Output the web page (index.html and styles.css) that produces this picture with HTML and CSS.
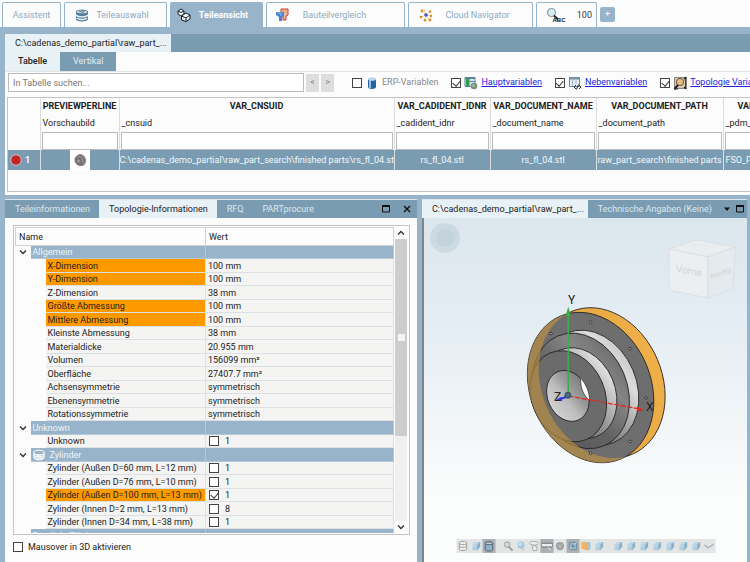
FILE: index.html
```html
<!DOCTYPE html>
<html lang="de">
<head>
<meta charset="utf-8">
<title>Teileansicht</title>
<link rel="stylesheet" href="styles.css">
</head>
<body>
<svg class="defs" aria-hidden="true">
  <defs>
    <linearGradient id="cubeFill" x1="0" y1="0" x2="1" y2="1"><stop offset="0" stop-color="#c9e0ed"/><stop offset="1" stop-color="#9dc1d8"/></linearGradient>
    <symbol id="cube" viewBox="0 0 12 12"><path d="M2 4l3-2.500h5.500v5L7.500 10.500H2z" fill="url(#cubeFill)"/><path d="M7.500 4l3-2.500v5l-3 4z" fill="#87afc9"/></symbol>
    <symbol id="chevron" viewBox="0 0 8 8"><path d="M1 2.500l3 3 3-3" fill="none" stroke="#333" stroke-width="1.400"/></symbol>
  </defs>
</svg>

<nav class="main-tabs">
  <button class="main-tab w-assist">Assistent</button>
  <button class="main-tab w-select">
    <svg class="icon" viewBox="0 0 14 14"><path d="M1 4.500v7c1 2.500 11 2.500 12 0v-7z" fill="#56809b"/><path d="M1 4c1-2.600 11-2.600 12 0-1 2.600-11 2.600-12 0z" fill="#d3e3ed" stroke="#416a85" stroke-width=".8"/><path d="M1 7c2 2.500 10 2.500 12 0M2 10c2 2 8 2 10 0" fill="none" stroke="#e6f0f5" stroke-width="1.300"/><path d="M4 4l5-1.500M6 5l4-1.500" stroke="#416a85" stroke-width=".8"/></svg>
    <span>Teileauswahl</span></button>
  <button class="main-tab w-view active">
    <svg class="icon" viewBox="0 0 14 14"><g fill="#eef3f6" stroke="#17202a" stroke-width="1"><path d="M1 3l3-2 3 2v3L4 8 1 6z"/><path d="M4.500 8l4.500-3 4 2v4l-4 2.500L4.500 12z"/><path d="M4.500 8l4.500 2 4-3M9 10v3.500M1 3l3 1.500L7 3" fill="none"/></g></svg>
    <span>Teileansicht</span></button>
  <button class="main-tab w-compare">
    <svg class="icon" viewBox="0 0 14 14"><path d="M6 1h7v6l-2 1v4H8V8L6 6z" fill="#e8b9a4" stroke="#d5372d" stroke-width="1"/><path d="M7.500 3h3.500v2" fill="none" stroke="#eaa22f"/><path d="M1 4h8v4L7 9v4H4V9L1 7z" fill="#4a83cf"/><path d="M2 5h4v3" fill="none" stroke="#8db9ec"/></svg>
    <span>Bauteilvergleich</span></button>
  <button class="main-tab w-cloud">
    <svg class="icon" viewBox="0 0 14 14"><path d="M3 3l4 4 4-3M2 9l5-2 5 1M6 12l1-5 4 5M5 1l2 6" stroke="#edc17b" stroke-width=".8" fill="none"/><g fill="#dd8a16"><circle cx="3" cy="3" r="1.400"/><circle cx="11" cy="3.500" r="1.200"/><circle cx="2" cy="9" r="1.300"/><circle cx="12" cy="8" r="1.200"/><circle cx="6" cy="12.300" r="1.300"/><circle cx="11" cy="12" r="1.400"/></g><circle cx="7" cy="7" r="1.700" fill="#3a4ee0"/></svg>
    <span>Cloud Navigator</span></button>
  <button class="main-tab w-search">
    <svg class="icon-search" viewBox="0 0 20 16"><circle cx="5.500" cy="5.500" r="4" fill="#d6ecf7" stroke="#949da3" stroke-width="1.200"/><path d="M8 8.500l4 4" stroke="#222" stroke-width="1.800"/><text x="6.500" y="14.500" class="abc">ABC</text></svg>
    <span>100</span></button>
  <button class="add-tab" aria-label="Neuer Tab">+</button>
</nav>

<main class="workspace">
  <section class="panel table-panel">
    <div class="bar"><button class="bar-tab active doc">C:\cadenas_demo_partial\raw_part_...</button></div>
    <div class="sub-tabs"><button class="sub-tab active">Tabelle</button><button class="sub-tab">Vertikal</button></div>
    <div class="toolbar">
      <input class="search" type="text" placeholder="In Tabelle suchen..." aria-label="In Tabelle suchen">
      <button class="step">&lt;</button><button class="step">&gt;</button>
      <label class="option muted"><input type="checkbox">
        <svg class="icon" viewBox="0 0 14 14"><path d="M3 3v8c0 2.500 8 2.500 8 0V3z" fill="#28669a"/><path d="M5 4v8" stroke="#8cc4e8" stroke-width="2"/><ellipse cx="7" cy="3" rx="4" ry="1.800" fill="#b8d9ec"/></svg>
        <span>ERP-Variablen</span></label>
      <label class="option"><input type="checkbox" checked>
        <svg class="icon" viewBox="0 0 14 14"><path d="M1 1.500h10v9H1z" fill="#dbe6ee" stroke="#5e8298"/><path d="M2 3h3.500v7H2z" fill="#27a148"/><path d="M1 2.500h10M5.500 5.500H11" stroke="#5e8298"/><circle cx="10" cy="10" r="3.300" fill="#76937f"/><circle cx="9.500" cy="9.500" r="1.300" fill="#a8bbb0"/></svg>
        <a href="#haupt">Hauptvariablen</a></label>
      <label class="option"><input type="checkbox" checked>
        <svg class="icon" viewBox="0 0 14 14"><path d="M1.500 1.500h10v9h-10z" fill="#e7f0f5" stroke="#6b8ca3"/><path d="M1.500 2.500h10" stroke="#6b8ca3" stroke-width="2"/><path d="M4.500 2v8M8 2v6" stroke="#9cb8ca"/><path d="M8 9l-2 2 2 2M11 9l2 2-2 2M10.500 8.500L8.500 13.500" stroke="#222" fill="none"/></svg>
        <a href="#neben">Nebenvariablen</a></label>
      <label class="option"><input type="checkbox" checked>
        <svg class="icon" viewBox="0 0 14 14"><path d="M1.500 1.500h11v11h-11z" fill="#d9c8ad" stroke="#8c877d"/><path d="M13 1v12M11 3l2-2M11 11l2 2M1 13h4" stroke="#222" stroke-width="1.200"/><circle cx="7" cy="6" r="3.600" fill="#e9bd7b" stroke="#645a50"/><path d="M5 9l-3.500 4" stroke="#222" stroke-width="2"/></svg>
        <a href="#topo">Topologie Variablen</a></label>
    </div>
    <div class="grid-frame">
      <table class="parts">
        <colgroup><col class="c-num"><col class="c-prev"><col class="c-uid"><col class="c-idnr"><col class="c-name"><col class="c-path"><col class="c-pdm"></colgroup>
        <thead>
          <tr class="keys"><th></th><th>PREVIEWPERLINE</th><th>VAR_CNSUID</th><th>VAR_CADIDENT_IDNR</th><th>VAR_DOCUMENT_NAME</th><th>VAR_DOCUMENT_PATH</th><th>VAR_PDM_STATE</th></tr>
          <tr class="labels"><td></td><td>Vorschaubild</td><td>_cnsuid</td><td>_cadident_idnr</td><td>_document_name</td><td>_document_path</td><td>_pdm_state</td></tr>
          <tr class="filters"><td></td><td><input type="text" aria-label="Filter Vorschaubild"></td><td><input type="text" aria-label="Filter cnsuid"></td><td><input type="text" aria-label="Filter idnr"></td><td><input type="text" aria-label="Filter name"></td><td><input type="text" aria-label="Filter path"></td><td><input type="text" aria-label="Filter pdm"></td></tr>
        </thead>
        <tbody>
          <tr class="selected">
            <td class="num"><span class="status"><svg viewBox="0 0 12 12"><circle cx="6" cy="6" r="5.300" fill="#c92b28" stroke="#f0d5d5" stroke-width=".7"/><path d="M3 4h6M3 8h6M6 3v6" stroke="#a31c1a" stroke-width=".8"/></svg>1</span></td>
            <td class="preview"><span class="thumb"><svg viewBox="0 0 14 14"><ellipse cx="8" cy="7" rx="5" ry="6" transform="rotate(-20 8 7)" fill="#8c8c8c"/><ellipse cx="6.500" cy="7.500" rx="5" ry="5.500" transform="rotate(-20 6 7)" fill="#747474"/><path d="M4 4c4-2 6 2 6 6" fill="none" stroke="#a2a2a2"/><circle cx="5.500" cy="8" r="1.500" fill="#9c9c9c"/></svg></span></td>
            <td class="tight">C:\cadenas_demo_partial\raw_part_search\finished parts\rs_fl_04.stl</td><td>rs_fl_04.stl</td><td>rs_fl_04.stl</td><td class="tight">raw_part_search\finished parts</td><td class="left">FSO_PART</td>
          </tr>
        </tbody>
      </table>
    </div>
  </section>

  <div class="lower">
    <section class="panel info-panel">
      <div class="bar">
        <button class="bar-tab">Teileinformationen</button><button class="bar-tab active">Topologie-Informationen</button><button class="bar-tab">RFQ</button><button class="bar-tab">PARTprocure</button>
        <span class="spacer"></span>
        <button class="win" aria-label="Maximieren"><svg viewBox="0 0 8 8"><path d="M.5 1h7v6h-7z" fill="none" stroke="#111"/><path d="M0 1h8" stroke="#111" stroke-width="2"/></svg></button>
        <button class="win" aria-label="Schließen"><svg viewBox="0 0 8 8"><path d="M1 1l6 6M7 1L1 7" stroke="#111" stroke-width="1.400"/></svg></button>
      </div>
      <div class="tree-frame">
        <div class="tree-view">
          <table class="tree">
            <colgroup><col class="t-arrow"><col class="t-indent"><col class="t-name"><col></colgroup>
            <thead><tr><th colspan="3">Name</th><th>Wert</th></tr></thead>
            <tbody>
              <tr class="group"><td><svg><use href="#chevron"/></svg></td><td colspan="2">Allgemein</td><td></td></tr>
              <tr class="hit"><td></td><td></td><td>X-Dimension</td><td>100 mm</td></tr>
              <tr class="hit"><td></td><td></td><td>Y-Dimension</td><td>100 mm</td></tr>
              <tr><td></td><td></td><td>Z-Dimension</td><td>38 mm</td></tr>
              <tr class="hit"><td></td><td></td><td>Größte Abmessung</td><td>100 mm</td></tr>
              <tr class="hit"><td></td><td></td><td>Mittlere Abmessung</td><td>100 mm</td></tr>
              <tr><td></td><td></td><td>Kleinste Abmessung</td><td>38 mm</td></tr>
              <tr><td></td><td></td><td>Materialdicke</td><td>20.955 mm</td></tr>
              <tr><td></td><td></td><td>Volumen</td><td>156099 mm³</td></tr>
              <tr><td></td><td></td><td>Oberfläche</td><td>27407.7 mm²</td></tr>
              <tr><td></td><td></td><td>Achsensymmetrie</td><td>symmetrisch</td></tr>
              <tr><td></td><td></td><td>Ebenensymmetrie</td><td>symmetrisch</td></tr>
              <tr><td></td><td></td><td>Rotationssymmetrie</td><td>symmetrisch</td></tr>
              <tr class="group"><td><svg><use href="#chevron"/></svg></td><td colspan="2">Unknown</td><td></td></tr>
              <tr><td></td><td></td><td>Unknown</td><td><label><input type="checkbox">1</label></td></tr>
              <tr class="group"><td><svg><use href="#chevron"/></svg></td><td colspan="2"><span class="with-icon"><svg viewBox="0 0 12 12"><path d="M.8 3.500v5c.5 3 10 3 10.400 0v-5" fill="#c7d9e5" stroke="#fff"/><ellipse cx="6" cy="3.500" rx="5.200" ry="2.300" fill="#98b4ca" stroke="#fff"/><path d="M2 7l8 3M1 9l5 2M4 6.500l6 1.500" stroke="#fff"/></svg>Zylinder</span></td><td></td></tr>
              <tr><td></td><td></td><td>Zylinder (Außen D=60 mm, L=12 mm)</td><td><label><input type="checkbox">1</label></td></tr>
              <tr><td></td><td></td><td>Zylinder (Außen D=76 mm, L=10 mm)</td><td><label><input type="checkbox">1</label></td></tr>
              <tr class="hit"><td></td><td></td><td>Zylinder (Außen D=100 mm, L=13 mm)</td><td><label><input type="checkbox" checked>1</label></td></tr>
              <tr><td></td><td></td><td>Zylinder (Innen D=2 mm, L=13 mm)</td><td><label><input type="checkbox">8</label></td></tr>
              <tr><td></td><td></td><td>Zylinder (Innen D=34 mm, L=38 mm)</td><td><label><input type="checkbox">1</label></td></tr>
              <tr class="group"><td></td><td colspan="2">Parallele Flächen</td><td></td></tr>
            </tbody>
          </table>
        </div>
        <div class="scrollbar">
          <svg viewBox="0 0 8 8"><path d="M1 5.500l3-3 3 3" fill="none" stroke="#333" stroke-width="1.400"/></svg>
          <div class="track"><div class="thumb-bar"><i></i></div></div>
          <svg viewBox="0 0 8 8"><use href="#chevron"/></svg>
        </div>
      </div>
      <label class="mouseover"><input type="checkbox">Mausover in 3D aktivieren</label>
    </section>

    <section class="panel view-panel">
      <div class="bar">
        <button class="bar-tab active doc">C:\cadenas_demo_partial\raw_part_...</button><button class="bar-tab tech">Technische Angaben (Keine)</button>
        <span class="spacer"></span>
        <button class="win" aria-label="Ansichten"><svg viewBox="0 0 8 8"><path d="M1 2.500h6L4 6z" fill="#111"/></svg></button>
        <button class="win" aria-label="Maximieren"><svg viewBox="0 0 8 8"><path d="M.5 1h7v6h-7z" fill="none" stroke="#111"/><path d="M0 1h8" stroke="#111" stroke-width="2"/></svg></button>
      </div>
      <div class="viewer">
        <svg class="scene" viewBox="0 0 323 344" preserveAspectRatio="xMidYMin slice">
          <defs>
            <linearGradient id="orange" x1="0" y1="0" x2="0" y2="1"><stop offset="0" stop-color="#efb04a"/><stop offset=".6" stop-color="#e6a63f"/><stop offset="1" stop-color="#c98d20"/></linearGradient>
            <linearGradient id="ring" gradientUnits="userSpaceOnUse" x1="260" y1="150" x2="360" y2="500"><stop offset="0" stop-color="#c2c2c2"/><stop offset=".2" stop-color="#dcdcdc"/><stop offset=".42" stop-color="#a5a5a5"/><stop offset=".6" stop-color="#7c7c7c"/><stop offset=".85" stop-color="#727272"/><stop offset="1" stop-color="#b8b8b8"/></linearGradient>
            <linearGradient id="cone" gradientUnits="userSpaceOnUse" x1="180" y1="160" x2="300" y2="500"><stop offset="0" stop-color="#666"/><stop offset=".3" stop-color="#858585"/><stop offset=".6" stop-color="#626262"/><stop offset=".85" stop-color="#5c5c5c"/><stop offset="1" stop-color="#808080"/></linearGradient>
            <linearGradient id="bore" gradientUnits="userSpaceOnUse" x1="170" y1="270" x2="215" y2="425"><stop offset="0" stop-color="#6e6e6e"/><stop offset=".4" stop-color="#9b9b9b"/><stop offset=".6" stop-color="#bdbdbd"/><stop offset="1" stop-color="#d8d8d8"/></linearGradient>
            <clipPath id="boreClip"><ellipse cx="204" cy="348" rx="79" ry="61" transform="rotate(67 204 348)"/></clipPath>
            <mask id="outsideBack" maskUnits="userSpaceOnUse" x="0" y="0" width="570" height="600"><path d="M0 0h570v600H0z" fill="#fff" stroke="none"/><ellipse cx="306" cy="309" rx="233" ry="181" transform="rotate(67 306 309)" fill="#000"/></mask>
          </defs>
          <circle cx="21" cy="20" r="15" fill="#c5d5de" opacity=".75"/><circle cx="21" cy="20" r="9" fill="#bccfd8" opacity=".6"/>
          <g class="nav-cube" stroke="#d7dbde" stroke-width=".7">
            <path d="M245 31l27-9 39 7-27 10z" fill="#e9eef1"/><path d="M245 31l39 8v41l-39-8z" fill="#ebeff2"/><path d="M284 39l27-10-2 42-25 9z" fill="#e4eaee"/><path d="M267 28l8-2 9 2" fill="none" stroke-dasharray="2 1"/>
            <text class="cube-label" transform="translate(252 54) skewY(10)">Vorne</text><text class="cube-label small" transform="translate(286 61) skewY(-18)">Rechts</text>
          </g>
          <g transform="translate(76 62) scale(.333)" stroke="#222" stroke-width="2.400" fill="none">
            <ellipse cx="306" cy="309" rx="233" ry="181" transform="rotate(67 306 309)" fill="url(#orange)"/>
            <ellipse cx="272" cy="323" rx="233" ry="181" transform="rotate(67 272 323)" fill="#6e6e6e"/>
            <ellipse cx="271" cy="324" rx="179" ry="139" transform="rotate(67 271 324)" fill="url(#ring)"/>
            <ellipse cx="243" cy="333" rx="179" ry="139" transform="rotate(67 243 333)" fill="url(#cone)"/>
            <ellipse cx="236" cy="340" rx="141" ry="110" transform="rotate(67 236 340)" fill="url(#ring)"/>
            <ellipse cx="205" cy="349" rx="141" ry="110" transform="rotate(67 205 349)" fill="#6b6b6b"/>
            <ellipse cx="204" cy="348" rx="79" ry="61" transform="rotate(67 204 348)" fill="url(#bore)"/>
            <path d="M243 288c-4 30 6 58 24 72l30-20-25-60z" fill="#fbfbfb" stroke-width="2" clip-path="url(#boreClip)"/>
            <g mask="url(#outsideBack)"><ellipse cx="272" cy="323" rx="233" ry="181" transform="rotate(67 272 323)" fill="#c39340" fill-opacity=".62" stroke="none"/></g>
            <g fill="#aaa"><circle cx="272" cy="127" r="4"/><circle cx="153" cy="161" r="4"/><circle cx="390" cy="206" r="4"/><circle cx="439" cy="354" r="4"/><circle cx="391" cy="485" r="4"/><circle cx="272" cy="520" r="4"/></g>
            <g stroke-width="4"><path d="M205 345V100" stroke="#3dac48" stroke-width="5"/><path d="M205 80l-8 27h16z" fill="#3dac48" stroke="none"/><path d="M205 348l212 39" stroke="#dc2a20" stroke-dasharray="16 4"/><path d="M433 391l-20-11-3 14z" fill="#dc2a20" stroke="none"/><path d="M203 350l-25 8" stroke="#2d35d8" stroke-width="6"/><path d="M168 361l15-10 4 12z" fill="#2d35d8" stroke="none"/></g>
            <circle cx="204" cy="346" r="9" fill="#456b80" stroke="#283e4c"/>
          </g>
          <g class="axis"><text x="144" y="86">Y</text><text x="222" y="193">X</text><text x="130" y="183">Z</text></g>
        </svg>
        <div class="view-tools">
          <button aria-label="Drahtmodell"><svg viewBox="0 0 12 12"><path d="M2 2.500v7c0 2 8 2 8 0v-7c0-2-8-2-8 0zM2 3c0 2 8 2 8 0M2 6c0 2 8 2 8 0" fill="#eee" stroke="#999"/></svg></button>
          <button aria-label="Schattiert"><svg><use href="#cube"/></svg></button>
          <button class="on" aria-label="Schattiert mit Kanten"><svg viewBox="0 0 12 12"><path d="M2 3v7c0 2 8 2 8 0V3c0-2-8-2-8 0z" fill="#8fb1c8" stroke="#4e6170"/><ellipse cx="6" cy="3" rx="4" ry="1.500" fill="#bfd3df" stroke="#4e6170"/></svg></button>
          <i class="gap"></i>
          <button aria-label="Zoom"><svg viewBox="0 0 12 12"><circle cx="5" cy="4.500" r="3" fill="#d5d8da" stroke="#999"/><path d="M7 7l4 4" stroke="#999" stroke-width="2"/></svg></button>
          <button aria-label="Einpassen"><svg viewBox="0 0 12 12"><circle cx="6" cy="5" r="4" fill="#a9cbe0"/><circle cx="5" cy="4" r="2" fill="#c7ddea"/><path d="M7 8l2 3" stroke="#aaa"/></svg></button>
          <button aria-label="Drehen"><svg viewBox="0 0 12 12"><ellipse cx="6" cy="3" rx="5" ry="2" fill="#eee" stroke="#aaa"/><path d="M4 6h5v5H5z" fill="#eee" stroke="#aaa"/></svg></button>
          <button class="on" aria-label="Messen"><svg viewBox="0 0 12 12"><path d="M0 3h12v4H0z" fill="#eee" stroke="#666"/><path d="M7 7l3 4" stroke="#eee"/></svg></button>
          <button aria-label="Mittelpunkt"><svg viewBox="0 0 12 12"><circle cx="6" cy="6" r="4.500" fill="#999"/><path d="M2 4l8 4M6 1.500v9M2 8l8-4" stroke="#bbb"/></svg></button>
          <button class="on" aria-label="Schnitt"><svg viewBox="0 0 12 12"><path d="M2 2h8v8H2z" fill="#9ab9cc" stroke="#6f8796"/><path d="M2 10l8-8" stroke="#ddd"/><circle cx="6" cy="6" r="2" fill="#6c93ac"/></svg></button>
          <button aria-label="Schnittebene"><svg viewBox="0 0 12 12"><path d="M3 1l8 1v7l-2 2-6-2z" fill="#a9c4d4"/><path d="M1 1l7 2v8L1 9z" fill="#f1b35d"/></svg></button>
          <button aria-label="Perspektive"><svg><use href="#cube"/></svg></button>
          <i class="gap"></i>
          <button aria-label="Vorne"><svg><use href="#cube"/></svg></button>
          <button aria-label="Hinten"><svg><use href="#cube"/></svg></button>
          <button aria-label="Links"><svg><use href="#cube"/></svg></button>
          <button aria-label="Rechts"><svg><use href="#cube"/></svg></button>
          <button aria-label="Oben"><svg><use href="#cube"/></svg></button>
          <button aria-label="Unten"><svg><use href="#cube"/></svg></button>
          <button aria-label="Isometrisch"><svg><use href="#cube"/></svg></button>
          <button aria-label="Mehr"><svg viewBox="0 0 12 12"><path d="M1 5l4 3 6-4" fill="none" stroke="#9fb0bc" stroke-width="1.300"/></svg></button>
        </div>
      </div>
    </section>
  </div>
</main>
</body>
</html>
```
FILE: styles.css
```css
:root {
  --blue: #98b4ca;
  --bar: #7a9cb2;
  --pale: #e8f1f6;
  --white: #fcfcfc;
  --line: #c4c4c4;
}
* { box-sizing: border-box; }
body {
  margin: 0;
  height: 100vh;
  overflow: hidden;
  display: flex;
  flex-direction: column;
  background: var(--white);
  color: #222;
  font: 9px/13px Roboto, "Noto Sans", sans-serif;
}
button, input { font: inherit; color: inherit; margin: 0; }
button { border: 0; padding: 0; background: none; white-space: nowrap; }
svg { display: block; }
.defs { position: absolute; width: 0; height: 0; }
.icon { width: 14px; height: 14px; flex: none; }

input[type="checkbox"] {
  appearance: none;
  flex: none;
  display: grid;
  justify-items: center;
  width: 10px;
  height: 10px;
  border: 1px solid #444;
  background: #fff;
}
input[type="checkbox"]:checked::after {
  content: "";
  width: 4px;
  height: 6px;
  border: solid #333;
  border-width: 0 1px 1px 0;
  transform: rotate(40deg);
}

/* main tabs */
.main-tabs { display: flex; gap: 3px; padding: 2px 2px 0; height: 27px; flex: none; }
.main-tab {
  display: flex;
  align-items: center;
  flex: none;
  height: 25px;
  padding: 0 10px;
  border: 1px solid var(--blue);
  border-bottom: 0;
  border-radius: 2px 2px 0 0;
  color: #8daac2;
}
.main-tab span { flex: 1; text-align: center; }
.main-tab.active { background: var(--blue); color: #fff; font-weight: 700; }
.w-assist { width: 59px; justify-content: center; }
.w-select { width: 103px; }
.w-view { width: 93px; padding: 0 6px; }
.w-compare { width: 139px; padding: 0 24px 0 8px; }
.w-cloud { width: 125px; }
.w-search { width: 61px; padding: 0 4px 0 9px; color: #333; }
.w-search span { text-align: right; }
.icon-search { width: 20px; height: 16px; flex: none; }
.abc { font: bold 6px "Liberation Sans", sans-serif; fill: #111; }
.add-tab { width: 15px; height: 15px; margin-top: 5px; border-radius: 2px; background: var(--blue); color: #fff; }

/* panels */
.workspace {
  flex: 1;
  min-height: 0;
  display: flex;
  flex-direction: column;
  gap: 4px;
  padding: 7px 0 0 5px;
  background: var(--blue);
}
.panel { background: var(--white); min-width: 0; overflow: hidden; }
.table-panel { padding-bottom: 3px; flex: none; }
.bar { display: flex; height: 18px; background: var(--bar); }
.bar-tab { padding: 0 9px 0 10px; color: #dce8ef; }
.bar-tab.active { background: var(--pale); color: #222; }
.bar-tab.doc { padding-right: 4px; }
.sub-tabs { display: flex; height: 20px; border-bottom: 1px solid #e3e3e3; }
.sub-tab { padding: 0 13px; background: var(--bar); color: #e4edf2; }
.sub-tab.active { background: var(--pale); color: #222; font-weight: 500; }

.toolbar { display: flex; align-items: center; height: 25px; padding: 0 3px 4px; white-space: nowrap; overflow: hidden; }
.search { flex: none; width: 296px; height: 19px; border: 1px solid #bbb; padding: 0 4px; background: #fff; }
.search::placeholder { color: #777; opacity: 1; }
.step { flex: none; width: 13px; height: 18px; margin-left: 2px; background: #dedede; color: #888; }
.option { display: flex; align-items: center; gap: 3px; margin-left: 13px; flex: none; }
.option.muted { margin-left: 18px; color: #888; }
.option a { color: #2323dd; }

.grid-frame { margin-left: 2px; height: 95px; border: 1px solid var(--line); border-right: 0; overflow: hidden; }
.parts { width: 816px; table-layout: fixed; border-collapse: collapse; }
.parts th, .parts td { padding: 0 2px; border-right: 1px solid #ddd; overflow: hidden; white-space: nowrap; }
.c-num { width: 32px; }
.c-prev { width: 79px; }
.c-uid { width: 275px; }
.c-idnr { width: 96px; }
.c-name { width: 106px; }
.c-path { width: 127px; }
.keys { height: 17px; font-weight: 700; }
.labels { height: 17px; }
.filters { height: 18px; }
.parts .filters td { padding: 0 1px; }
.filters input { display: block; width: 100%; height: 18px; border: 1px solid #bbb; background: #fff; }
.selected { height: 20px; background: var(--bar); color: #f4f8fa; text-align: center; }
.parts .left { text-align: left; }
.parts .tight { padding: 0; }
.status { display: flex; align-items: center; gap: 3px; font-weight: 700; }
.status svg { width: 12px; height: 12px; }
.thumb { display: block; width: 20px; height: 20px; padding: 3px; margin: 0 auto; background: #fff; }

/* lower half */
.lower { flex: 1; min-height: 0; display: flex; gap: 5px; padding-right: 3px; }
.info-panel { flex: 412 1 0; display: flex; flex-direction: column; }
.view-panel { flex: 325 1 0; display: flex; flex-direction: column; }
.info-panel, .view-panel { border-top: 1px solid #dbe6ee; }
.lower .bar { flex: none; }
.spacer { flex: 1; }
.win { width: 21px; display: grid; place-items: center; }
.win svg { width: 8px; height: 8px; }
.view-panel .win { width: 18px; }

.tree-frame { display: flex; flex: 1; min-height: 0; margin: 7px 7px 0 8px; padding: 1px; border: 1px solid var(--line); }
.tree-view { flex: 1; min-width: 0; overflow: hidden; }
.tree { width: 100%; table-layout: fixed; border-collapse: collapse; }
.tree td, .tree th { padding: 0 3px; overflow: hidden; white-space: nowrap; font-weight: 400; text-align: left; line-height: 12px; }
.tree th { height: 18px; border: 1px solid #d2d2d2; }
.t-arrow, .t-indent { width: 15px; }
.t-name { width: 160px; }
.tree tbody tr { height: 13px; }
.tree tbody tr:nth-child(even) { height: 14px; }
.tree tbody td:nth-last-child(-n+2) { background: #f4f4f2; border-bottom: 1px solid #dcdfe4; border-right: 1px solid #dcdfe4; padding: 0 2px; }
.tree tbody .group td:nth-last-child(-n+2) { background: var(--blue); border-color: #b4c8d8; color: #eef5f9; }
.tree tbody .hit td:nth-last-child(2) { background: #ff9900; }
.tree td > svg { width: 8px; height: 8px; }
.tree label { display: flex; align-items: center; gap: 6px; padding-left: 1px; }
.with-icon { display: flex; align-items: center; gap: 5px; }
.with-icon svg { width: 12px; height: 12px; }

.scrollbar { width: 14px; display: flex; flex-direction: column; align-items: center; gap: 2px; padding: 2px 0; }
.scrollbar > svg { width: 8px; height: 8px; flex: none; }
.track { flex: 1; width: 12px; background: #f0f0f0; }
.thumb-bar { height: 70%; background: #cdcdcd; display: grid; place-items: center; }
.thumb-bar i { width: 7px; height: 7px; background: #f4f4f4; }
.mouseover { display: flex; align-items: center; gap: 5px; height: 27px; padding: 0 8px 3px; flex: none; }

.viewer {
  flex: 1;
  min-height: 0;
  position: relative;
  border-left: 2px solid #858585;
  background: linear-gradient(#dbe6ed, #e6eef4 35%, #fbfcfc 80%);
}
.scene { width: 100%; height: 100%; }
.axis { font: 12px Roboto, sans-serif; fill: #222; }
.cube-label { font: 10px Roboto, sans-serif; fill: #cfd4d8; stroke: none; }
.cube-label.small { font-size: 7px; }
.view-tools { position: absolute; left: 50%; bottom: 9px; transform: translateX(-50%); display: flex; height: 14px; background: #e3e5e4; }
.view-tools button { width: 13px; height: 14px; display: grid; place-items: center; }
.view-tools svg { width: 11px; height: 12px; }
.view-tools .on { background: #aab0b4; }
.gap { width: 6px; }
```
